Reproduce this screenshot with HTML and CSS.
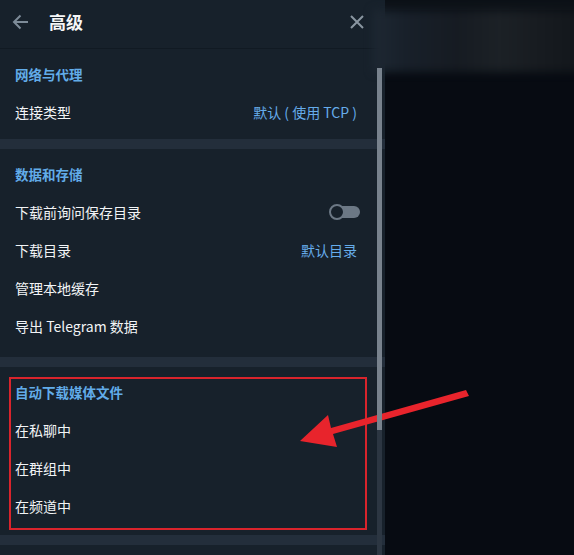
FILE: index.html
```html
<!DOCTYPE html>
<html lang="zh-CN">
<head>
    <meta charset="UTF-8">
    <title>高级</title>
    <link rel="stylesheet" href="styles.css">
</head>
<body>

    <div class="app">
        <div class="panel">
            <div class="content">
                <div class="header">
                    <span class="icon-btn back">
                        <svg width="20" height="20" viewBox="0 0 20 20"><path d="M17 10H3.5M9.5 3.5L3 10l6.5 6.5" fill="none" stroke="#7d8b98" stroke-width="2"/></svg>
                    </span>
                    <h1 class="title">高级</h1>
                    <span class="icon-btn close">
                        <svg width="16" height="16" viewBox="0 0 16 16"><path d="M2 2l12 12M14 2L2 14" fill="none" stroke="#8a96a1" stroke-width="2"/></svg>
                    </span>
                </div>

                <div class="section short">
                    <div class="section-title">网络与代理</div>
                    <div class="row"><span>连接类型</span><span class="value">默认 ( 使用 TCP )</span></div>
                </div>
                <div class="divider"></div>

                <div class="section tall">
                    <div class="section-title">数据和存储</div>
                    <div class="row"><span>下载前询问保存目录</span><span class="toggle"><span class="knob"></span></span></div>
                    <div class="row"><span>下载目录</span><span class="value">默认目录</span></div>
                    <div class="row"><span>管理本地缓存</span></div>
                    <div class="row"><span>导出 Telegram 数据</span></div>
                </div>
                <div class="divider"></div>

                <div class="section">
                    <div class="section-title">自动下载媒体文件</div>
                    <div class="row"><span>在私聊中</span></div>
                    <div class="row"><span>在群组中</span></div>
                    <div class="row"><span>在频道中</span></div>
                </div>
                <div class="divider"></div>
            </div>
            <div class="scrollbar">
                <div class="thumb"></div>
            </div>
        </div>
        <div class="backdrop"></div>
    </div>

    <!-- annotations over the screenshot -->
    <div class="haze"></div>
    <div class="mark-box"></div>
    <svg class="mark-arrow" width="574" height="555" viewBox="0 0 574 555">
        <path d="M466 390 L469 396 L333 434 L337 447 L300 441 L328 415 L331 428 Z" fill="#e8242c"/>
    </svg>

</body>
</html>
```

FILE: styles.css
```css
body {
    margin: 0;
    background: #070b12;
    font-family: "Noto Sans CJK SC", "Noto Sans", sans-serif;
    color: #f2f4f6;
    overflow: hidden;
}

.app {
    display: flex;
    height: 555px;
}

.panel {
    width: 385px;
    display: flex;
    background: #17212b;
}

.content {
    width: 385px;
    margin-right: -8px;
}

.header {
    display: flex;
    align-items: center;
    border-bottom: 1px solid #111a23;
    padding: 0 14px 5px 11px;
    box-sizing: border-box;
    height: 49px;
}

.icon-btn {
    display: flex;
}

.title {
    margin: 0 0 0 18px;
    font-size: 17px;
    font-weight: bold;
    flex: 1;
    color: #f5f6f7;
}

.close {
    margin-right: 6px;
}

.section {
    padding: 14px 0 10px;
}

.section.short {
    padding-bottom: 8px;
}

.section.tall {
    padding-bottom: 12px;
}

.section-title {
    padding: 0 15px;
    height: 22px;
    line-height: 22px;
    margin-bottom: 8px;
    font-size: 13.5px;
    font-weight: bold;
    color: #62ace9;
}

.row {
    height: 38px;
    display: flex;
    align-items: center;
    justify-content: space-between;
    padding: 0 28px 0 15px;
    font-size: 14px;
}

.value {
    color: #66acea;
}

.divider {
    height: 10px;
    background: #232e3b;
}

.toggle {
    position: relative;
    width: 30px;
    height: 12px;
    margin-right: -3px;
    border-radius: 6px;
    background: #6c7885;
}

.knob {
    position: absolute;
    left: -1px;
    top: -2px;
    width: 12px;
    height: 12px;
    border: 2px solid #6c7885;
    border-radius: 50%;
    background: #17212b;
}

.scrollbar {
    width: 8px;
    padding-top: 68px;
    position: relative;
    z-index: 1;
}

.thumb {
    width: 5px;
    height: 362px;
    background: #78828d;
}

.scrollbar::after {
    content: "";
    display: block;
    width: 5px;
    height: 125px;
    background: #2c3642;
}

.backdrop {
    flex: 1;
    background: #070b12;
    border-top: 10px solid #0c1117;
}

.haze {
    position: absolute;
    left: 373px;
    top: 10px;
    width: 210px;
    height: 62px;
    background: linear-gradient(90deg, #1e2833 0%, #18202a 15%, #161b22 40%, #1c2126 60%, #171b20 80%, #12161b 100%);
    filter: blur(4px);
}

.mark-box {
    position: absolute;
    left: 9px;
    top: 377px;
    width: 354px;
    height: 149px;
    border: 2px solid #d9242c;
}

.mark-arrow {
    position: absolute;
    left: 0;
    top: 0;
}
```
